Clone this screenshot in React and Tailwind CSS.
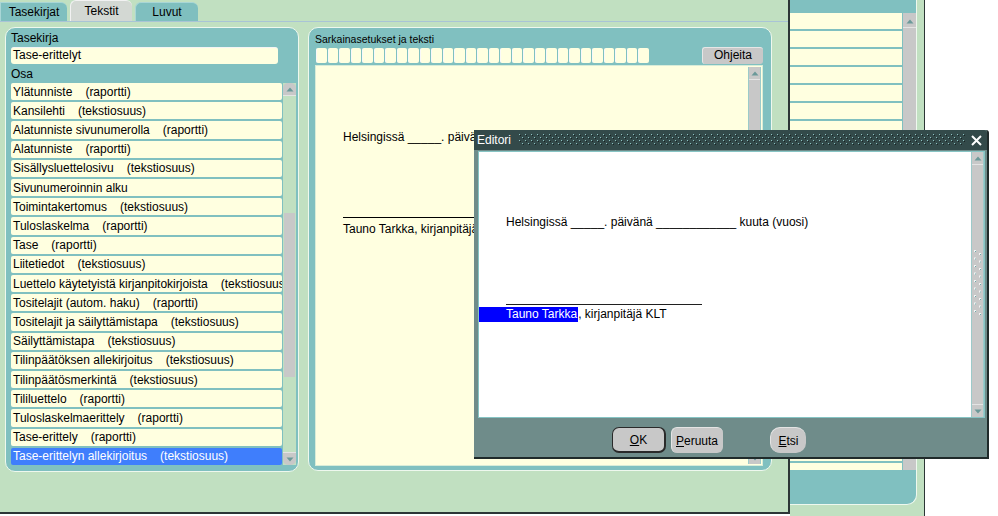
import React from 'react';

const osat = [
  ['Ylätunniste', 'raportti'],
  ['Kansilehti', 'tekstiosuus'],
  ['Alatunniste sivunumerolla', 'raportti'],
  ['Alatunniste', 'raportti'],
  ['Sisällysluettelosivu', 'tekstiosuus'],
  ['Sivunumeroinnin alku', null],
  ['Toimintakertomus', 'tekstiosuus'],
  ['Tuloslaskelma', 'raportti'],
  ['Tase', 'raportti'],
  ['Liitetiedot', 'tekstiosuus'],
  ['Luettelo käytetyistä kirjanpitokirjoista', 'tekstiosuus'],
  ['Tositelajit (autom. haku)', 'raportti'],
  ['Tositelajit ja säilyttämistapa', 'tekstiosuus'],
  ['Säilyttämistapa', 'tekstiosuus'],
  ['Tilinpäätöksen allekirjoitus', 'tekstiosuus'],
  ['Tilinpäätösmerkintä', 'tekstiosuus'],
  ['Tililuettelo', 'raportti'],
  ['Tuloslaskelmaerittely', 'raportti'],
  ['Tase-erittely', 'raportti'],
  ['Tase-erittelyn allekirjoitus', 'tekstiosuus'],
];

function ScrollButton({ down }) {
  return (
    <div
      className={`h-[13px] shrink-0 bg-[#c8c8c8] flex items-center justify-center ${
        down ? 'rounded-b-[5px] border-t border-[#e4e4e4]' : 'rounded-t-[5px] border-b border-[#e4e4e4]'
      }`}
    >
      <svg width="8" height="5" viewBox="0 0 8 5" className={down ? 'rotate-180' : ''}>
        <path d="M4 0.5 L7.5 4.5 H0.5 Z" fill="#6b9999" />
      </svg>
    </div>
  );
}

function Grip() {
  const dots = [];
  for (let i = 0; i < 9; i++) {
    dots.push(<rect key={'a' + i} x="0" y={i * 7.5} width="2" height="2" fill="#f4f4f4" />);
    dots.push(<rect key={'b' + i} x="5" y={i * 7.5 + 3} width="2" height="2" fill="#f4f4f4" />);
    dots.push(<rect key={'c' + i} x="1" y={i * 7.5 + 1} width="1" height="1" fill="#6aa8a8" />);
    dots.push(<rect key={'d' + i} x="6" y={i * 7.5 + 4} width="1" height="1" fill="#6aa8a8" />);
  }
  return (
    <svg width="8" height="70" viewBox="0 0 8 70">
      {dots}
    </svg>
  );
}

function Tab({ label, active, className = '' }) {
  return (
    <div
      className={`flex items-center justify-center text-[12px] rounded-t-[6px] ${
        active
          ? 'h-[21px] bg-[#d3d8d3] border-l border-t border-[#f2f2f2]'
          : 'h-[19px] bg-[#7fbfbf] border-l border-t border-[#a9d6d6]'
      } ${className}`}
    >
      {label}
    </div>
  );
}

function MainWindow() {
  return (
    <div className="absolute left-0 top-0 w-[790px] h-[514px] bg-[#c1e0c1] border-r-2 border-b-2 border-[#2c3636] flex flex-col">
      <div className="h-[21px] shrink-0 flex items-end gap-[3px]">
        <Tab label="Tasekirjat" className="w-[67px] rounded-tl-none" />
        <Tab label="Tekstit" active className="w-[62px]" />
        <Tab label="Luvut" className="w-[63px]" />
      </div>
      <div className="flex-1 border-t border-[#a9c4d6] flex items-start pt-[5px] pl-[5px] gap-[9px]">
        {/* vasen paneeli */}
        <div className="w-[294px] h-[445px] rounded-[10px] bg-[#80c0c0] border border-[#eef8ee] flex flex-col pl-[5px] pt-[3px]">
          <div className="text-[12px] leading-[14px]">Tasekirja</div>
          <div className="mt-[2px] w-[267px] h-[17px] bg-[#ffffe0] rounded-[3px] border-t border-[#f4f4f4] text-[12px] leading-[15px] pl-[2px]">
            Tase-erittelyt
          </div>
          <div className="mt-[3px] text-[12px] leading-[14px]">Osa</div>
          <div className="mt-[2px] flex gap-[1px]">
            <div className="w-[271px] h-[382px] grid grid-rows-[repeat(20,minmax(0,1fr))] gap-[2px]">
              {osat.map(([nimi, tyyppi], i) => {
                const valittu = i === osat.length - 1;
                return (
                  <div
                    key={nimi}
                    className={`flex items-center pl-[2px] rounded-[2px] text-[12px] whitespace-nowrap overflow-hidden ${
                      valittu ? 'bg-[#3f7efc] text-white' : 'bg-[#ffffe0] text-black'
                    }`}
                  >
                    <span>{nimi}</span>
                    {tyyppi && <span className="ml-[13px]">({tyyppi})</span>}
                  </div>
                );
              })}
            </div>
            <div className="w-[13px] h-[382px] flex flex-col bg-[#c1e0c1]">
              <ScrollButton />
              <div className="h-[117px]" />
              <div className="h-[164px] mx-[1px] bg-[#c8c8c8]" />
              <div className="flex-1" />
              <ScrollButton down />
            </div>
          </div>
        </div>

        {/* oikea paneeli */}
        <div className="w-[464px] h-[444px] rounded-[10px] bg-[#80c0c0] border border-[#eef8ee] flex flex-col pl-[6px] pr-[8px] pt-[5px] pb-[4px]">
          <div className="text-[10.5px] leading-[13px]">Sarkainasetukset ja teksti</div>
          <div className="mt-[1px] h-[17px] flex items-center justify-between">
            <div className="flex gap-[1px] ml-[1px]">
              {Array.from({ length: 29 }).map((_, i) => (
                <div key={i} className="w-[10.5px] h-[15px] bg-[#ffffe0] rounded-[2px] border-l border-[#f8f8f8]" />
              ))}
            </div>
            <div className="w-[61px] h-[17px] bg-[#c8c8c8] rounded-[3px] border-t border-l border-[#e6e6e6] text-[12px] leading-[15px] text-center">
              Ohjeita
            </div>
          </div>
          <div className="mt-[1px] flex-1 bg-[#ffffe0] border border-[#d8ecd8] flex">
            <div className="flex-1 pl-[27px] pt-[64px] text-[12px] leading-[14px] whitespace-nowrap overflow-hidden">
              <div>Helsingissä _____. päivänä ____________ kuuta (vuosi)</div>
              <div className="mt-[73px] w-[200px] h-[1px] bg-black" />
              <div className="mt-[4px]">Tauno Tarkka, kirjanpitäjä KLT</div>
            </div>
            <div className="w-[13px] my-[1px] mr-[1px] flex flex-col bg-[#c8c8c8] border-x border-[#9ccaca]">
              <ScrollButton />
              <div className="flex-1" />
              <ScrollButton down />
            </div>
          </div>
        </div>
      </div>
    </div>
  );
}

function TaustaIkkuna() {
  return (
    <div className="absolute left-[790px] top-0 w-[135px] h-[516px] bg-[#c1e0c1] border-r border-[#2c3636]">
      <div className="w-[127px] h-[505px] bg-[#80c0c0] rounded-br-[10px] border-r border-b border-[#eef8ee] pt-[13px]">
        <div className="flex gap-[1px] h-[457px]">
          <div className="w-[112px] flex flex-col gap-[2px] overflow-hidden">
            {Array.from({ length: 26 }).map((_, i) => (
              <div key={i} className="h-[16px] shrink-0 bg-[#ffffe0]" />
            ))}
          </div>
          <div className="w-[13px] flex flex-col bg-[#c8c8c8] pt-[2px]">
            <ScrollButton />
          </div>
        </div>
      </div>
    </div>
  );
}

function Editori() {
  return (
    <div className="absolute left-[474px] top-[130px] w-[515px] h-[329px] bg-[#6f8c8a] border-r-2 border-b-2 border-[#1f2a2a] rounded-tr-[3px] flex flex-col">
      <div className="h-[20px] shrink-0 bg-[#334a4a] flex items-center pl-[3px] pr-[5px] rounded-tr-[3px]">
        <span className="text-[12px] text-white">Editori</span>
        <svg className="flex-1 h-[12px] ml-[8px] mr-[6px]">
          <defs>
            <pattern id="pisteet" width="6" height="6" patternUnits="userSpaceOnUse">
              <rect x="0" y="0" width="1" height="1" fill="#8cc0c0" />
              <rect x="3" y="3" width="1" height="1" fill="#8cc0c0" />
              <rect x="1" y="1" width="1" height="1" fill="#182424" />
              <rect x="4" y="4" width="1" height="1" fill="#182424" />
            </pattern>
          </defs>
          <rect width="100%" height="100%" fill="url(#pisteet)" />
        </svg>
        <svg width="11" height="11" viewBox="0 0 11 11">
          <path d="M1 1 L10 10 M10 1 L1 10" stroke="#fff" strokeWidth="2" />
        </svg>
      </div>
      <div className="mt-[1px] ml-[4px] w-[507px] h-[267px] shrink-0 bg-white border border-[#86c4c4] flex">
        <div className="flex-1 pt-[63px] text-[12px] leading-[14px] whitespace-nowrap">
          <div className="pl-[27px]">Helsingissä _____. päivänä ____________ kuuta (vuosi)</div>
          <div className="ml-[27px] mt-[75px] w-[196px] h-[1px] bg-[#202020]" />
          <div className="mt-[2px] flex leading-[15px]">
            <span className="bg-[#0000ff] text-white pl-[27px] pr-[1px]">Tauno Tarkka</span>
            <span>, kirjanpitäjä KLT</span>
          </div>
        </div>
        <div className="w-[13px] flex flex-col bg-[#c8c8c8] border-x border-[#9ccaca]">
          <ScrollButton />
          <div className="flex-1 flex items-center justify-center">
            <Grip />
          </div>
          <ScrollButton down />
        </div>
      </div>
      <div className="flex-1 flex items-start pt-[9px] pl-[138px] text-[12px]">
        <div className="w-[54px] h-[26px] bg-[#c8c8c8] rounded-[7px] border border-b-2 border-r-2 border-[#2a2a2a] flex items-center justify-center">
          <span><span className="underline">O</span>K</span>
        </div>
        <div className="ml-[5px] w-[52px] h-[26px] bg-[#c8c8c8] rounded-[6px] border-t border-l border-[#e4e4e4] flex items-center pl-[4px]">
          <span><span className="underline">P</span>eruuta</span>
        </div>
        <div className="ml-[47px] w-[36px] h-[26px] bg-[#c8c8c8] rounded-[10px] border-t border-l border-[#e4e4e4] flex items-center justify-center">
          <span><span className="underline">E</span>tsi</span>
        </div>
      </div>
    </div>
  );
}

export default function App() {
  return (
    <div className="relative w-[998px] h-[516px] bg-white overflow-hidden text-black font-['Liberation_Sans',Arial,sans-serif]">
      <TaustaIkkuna />
      <MainWindow />
      <Editori />
    </div>
  );
}
